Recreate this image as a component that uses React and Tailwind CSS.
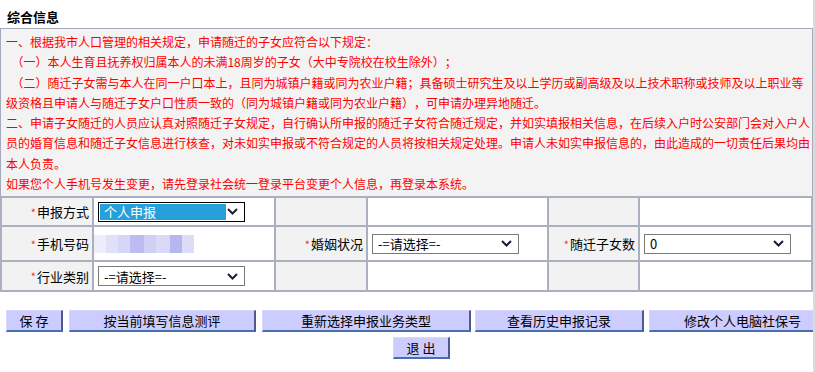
const NOTICE = [
  { text: '一、根据我市人口管理的相关规定，申请随迁的子女应符合以下规定：' },
  { text: '（一）本人生育且抚养权归属本人的未满18周岁的子女（大中专院校在校生除外）；', indent: true },
  { text: '（二）随迁子女需与本人在同一户口本上，且同为城镇户籍或同为农业户籍；具备硕士研究生及以上学历或副高级及以上技术职称或技师及以上职业等', indent: true },
  { text: '级资格且申请人与随迁子女户口性质一致的（同为城镇户籍或同为农业户籍），可申请办理异地随迁。' },
  { text: '二、申请子女随迁的人员应认真对照随迁子女规定，自行确认所申报的随迁子女符合随迁规定，并如实填报相关信息，在后续入户时公安部门会对入户人' },
  { text: '员的婚育信息和随迁子女信息进行核查，对未如实申报或不符合规定的人员将按相关规定处理。申请人未如实申报信息的，由此造成的一切责任后果均由' },
  { text: '本人负责。' },
  { text: '如果您个人手机号发生变更，请先登录社会统一登录平台变更个人信息，再登录本系统。' },
];

const BLUR = ['#ededfa', '#e0e0f8', '#d6d6f9', '#bcbcf2', '#d0d0f6', '#dadaf8', '#b6b6f0', '#dcdcf8'];

function Chevron() {
  return (
    <svg width="11" height="7" viewBox="0 0 11 7" className="shrink-0">
      <path d="M1 1 L5.5 5.5 L10 1" fill="none" stroke="#1d1d3a" strokeWidth="2" />
    </svg>
  );
}

function FakeSelect({ value, active }) {
  return (
    <div className={`flex h-[20px] w-[147px] items-center justify-between bg-white pr-[6px] text-[13px] leading-none text-black ${active ? 'border border-black pl-[1px]' : 'border border-[#7a7a7a] pl-[5px]'}`}>
      {active ? (
        <span className="flex h-[16px] w-[126px] items-center bg-[#26a0da] pl-[4px] text-white">{value}</span>
      ) : (
        <span>{value}</span>
      )}
      <Chevron />
    </div>
  );
}

function Label({ children }) {
  return (
    <div className="flex items-center justify-end bg-[#f2f2f2] pr-[3px] text-[13px] text-black">
      <span className="mr-[1px] text-[11px] text-[#ff2a2a]">*</span>
      {children}
    </div>
  );
}

const Gray = () => <div className="bg-[#f2f2f2]" />;
const White = ({ children }) => <div className="flex items-center bg-white pl-[4px]">{children}</div>;

function Btn({ label, className = '' }) {
  return (
    <button className={`h-[22px] shrink-0 border-l border-t border-l-[#d8d8ff] border-t-[#d8d8ff] border-r-2 border-b-2 border-r-[#4e5a8c] border-b-[#4870b0] bg-[#ccccff] text-[13px] leading-none text-black ${className}`}>
      {label}
    </button>
  );
}

export default function App() {
  return (
    <div className="flex h-[372px] w-[815px] overflow-hidden bg-white font-['Noto_Sans_CJK_SC',sans-serif] [text-spacing-trim:space-all]">
      <div className="w-[813px] shrink-0">
        {/* title */}
        <div className="h-[28px] pl-[7px] pt-[9px] text-[13px] font-bold leading-[16px] text-black">综合信息</div>

        {/* notice box */}
        <div className="border-l border-t border-r border-[#a3aabb] bg-[#f3f3f3] pb-[2px] pl-[5px] pt-[3px] text-[12px] leading-[20.3px] text-[#ff0000]">
          {NOTICE.map((l, i) => (
            <div key={i} className="whitespace-nowrap">
              {l.indent && '\u00a0\u00a0'}
              {l.text}
            </div>
          ))}
        </div>

        {/* form grid */}
        <div className="grid grid-cols-[90px_180px_90px_179px_89px_171px] grid-rows-[27px_33px_28px] gap-[2px] bg-[#aab0bf] p-[2px]">
          <Label>申报方式</Label>
          <White><FakeSelect value="个人申报" active /></White>
          <Gray />
          <White />
          <Gray />
          <White />

          <Label>手机号码</Label>
          <div className="flex items-center bg-white">
            <div className="flex h-[18px]">
              {BLUR.map((c, i) => (
                <div key={i} className={i === 3 || i === 5 ? 'w-[14px]' : 'w-[12px]'} style={{ background: c }} />
              ))}
            </div>
          </div>
          <Label>婚姻状况</Label>
          <White><FakeSelect value="-=请选择=-" /></White>
          <Label>随迁子女数</Label>
          <White><FakeSelect value="0" /></White>

          <Label>行业类别</Label>
          <White><FakeSelect value="-=请选择=-" /></White>
          <Gray />
          <White />
          <Gray />
          <White />
        </div>

        {/* buttons */}
        <div className="mt-[18px] flex w-[843px] pl-[6px]">
          <Btn label="保 存" className="w-[57px]" />
          <Btn label="按当前填写信息测评" className="ml-[6px] w-[187px]" />
          <Btn label="重新选择申报业务类型" className="ml-[6px] w-[209px]" />
          <Btn label="查看历史申报记录" className="ml-[4px] w-[169px]" />
          <Btn label="修改个人电脑社保号" className="ml-[5px] w-[188px]" />
        </div>
        <div className="mt-[5px] flex w-[843px] justify-center">
          <Btn label="退 出" className="w-[57px]" />
        </div>
      </div>
      <div className="w-[2px] shrink-0 bg-[#dcdcdc]" />
    </div>
  );
}
